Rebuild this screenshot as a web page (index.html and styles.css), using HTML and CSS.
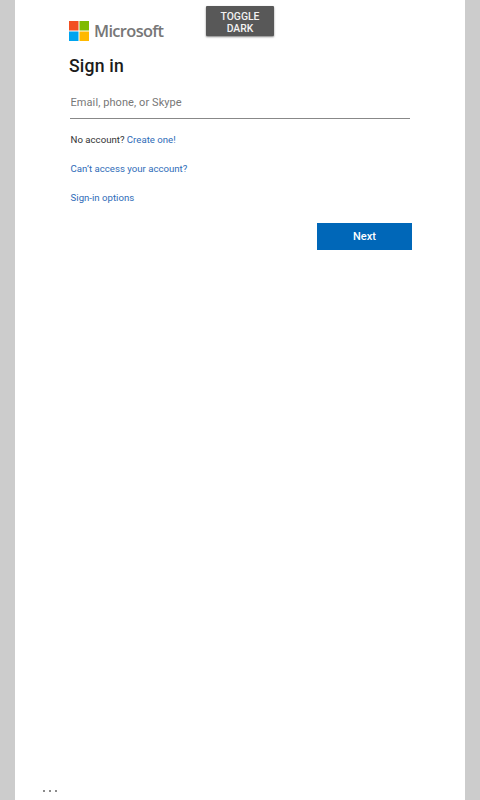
FILE: index.html
```html
<!DOCTYPE html>
<html lang="en">
<head>
<meta charset="utf-8">
<title>Sign in</title>
<link rel="stylesheet" href="styles.css">
</head>
<body>
<main class="page">
  <button class="toggle" type="button">TOGGLE<br>DARK</button>
  <form class="sign-in">
    <div class="brand">
      <svg class="logo" viewBox="0 0 20 20" aria-hidden="true">
        <path fill="#f25022" d="M0 0h9.5v9.5H0z"/>
        <path fill="#7fba00" d="M10.5 0H20v9.5h-9.5z"/>
        <path fill="#00a4ef" d="M0 10.5h9.5V20H0z"/>
        <path fill="#ffb900" d="M10.5 10.5H20V20h-9.5z"/>
      </svg>
      <span class="wordmark">Microsoft</span>
    </div>
    <h1 class="title">Sign in</h1>
    <input class="field" type="text" placeholder="Email, phone, or Skype">
    <p class="line first">No account? <a href="#">Create one!</a></p>
    <p class="line"><a href="#">Can’t access your account?</a></p>
    <p class="line"><a href="#">Sign-in options</a></p>
    <button class="next" type="button">Next</button>
  </form>
  <footer class="more"><i></i><i></i><i></i></footer>
</main>
</body>
</html>
```

FILE: styles.css
```css
* {
  box-sizing: border-box;
}

body {
  margin: 0;
  background: #ccc;
  font-family: Roboto, sans-serif;
}

.page {
  position: relative;
  display: flex;
  flex-direction: column;
  height: 800px;
  margin: 0 15px;
  padding: 21px 53px 8px 54px;
  background: #fff;
}

.toggle {
  position: absolute;
  top: 6px;
  left: 191px;
  width: 68px;
  height: 30px;
  padding: 3px 0 0;
  border: 0;
  border-radius: 1px;
  background: #585858;
  box-shadow: 0 1px 2px rgba(0, 0, 0, 0.5);
  color: #f2f2f2;
  font: 500 10.4px/12px Roboto, sans-serif;
}

.sign-in {
  display: flex;
  flex-direction: column;
}

.brand {
  display: flex;
  align-items: center;
  height: 20px;
}

.logo {
  width: 20px;
  height: 20px;
}

.wordmark {
  margin-left: 5px;
  color: #777;
  font: 600 16.4px/20px "Open Sans", sans-serif;
  letter-spacing: -0.65px;
}

.title {
  margin: 14px 0 0;
  color: #1b1b1b;
  font-size: 17.6px;
  font-weight: 500;
  line-height: 22px;
  letter-spacing: 0.2px;
}

.field {
  width: 340px;
  height: 31px;
  margin: 11px 0 0 1px;
  padding: 0 0.5px 1px;
  border: 0;
  border-bottom: 1px solid #888;
  outline: 0;
  font: 11px/16px Roboto, sans-serif;
  letter-spacing: 0.08px;
}

.field::placeholder {
  color: #777;
}

.line {
  margin: 17px 0 0 1.6px;
  color: #333;
  font-size: 9.65px;
  line-height: 12px;
}

.line.first {
  margin-top: 15px;
}

.line a {
  color: #2f6cb8;
  text-decoration: none;
}

.next {
  align-self: flex-end;
  width: 95px;
  height: 27px;
  margin-top: 19px;
  padding: 0;
  border: 0;
  background: #0067b8;
  color: #fff;
  font: 500 11px/27px Roboto, sans-serif;
}

.more {
  display: flex;
  gap: 4px;
  margin: auto 0 0 -26px;
}

.more i {
  width: 2px;
  height: 2px;
  background: #8c8c8c;
}
```
